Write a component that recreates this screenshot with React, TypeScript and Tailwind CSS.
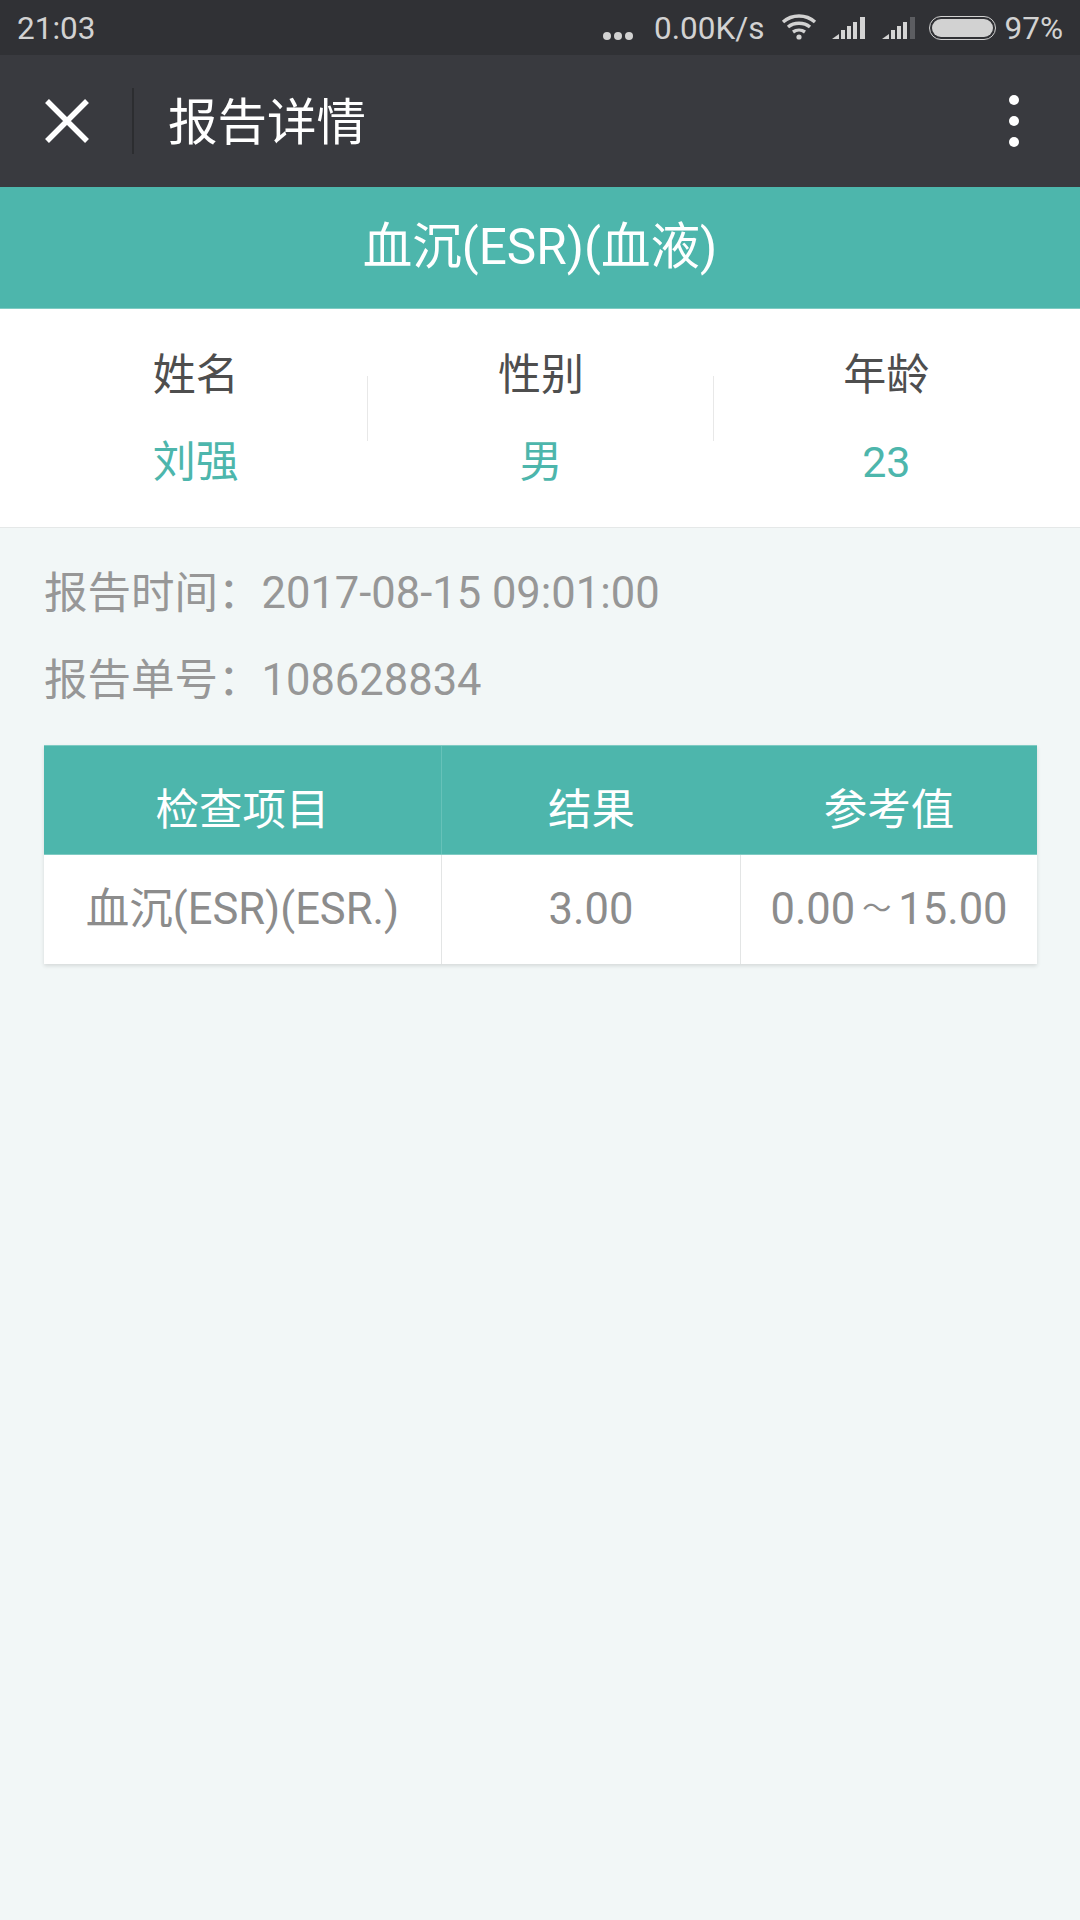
const font = "font-['Roboto','Noto_Sans_CJK_SC',sans-serif]"

function SignalIcon({ dim = false }: { dim?: boolean }) {
  return (
    <svg width="34" height="24" viewBox="0 0 34 24" fill="#d4d4d4">
      <path d="M0 23 L7 18 V23 Z" />
      <rect x="9" y="14" width="4" height="9" />
      <rect x="15" y="10" width="4" height="13" />
      <rect x="21" y="6" width="4" height="17" />
      <rect x="28" y="1" width="5" height="22" fill={dim ? "#5c5d61" : "#d4d4d4"} />
    </svg>
  )
}

function StatusBar() {
  return (
    <div className="flex h-[55px] items-center justify-between bg-[#303135] pl-[17px] pr-[17px] pt-[3px] text-[31.500px] text-[#d2d2d2]">
      <span>21:03</span>
      <div className="flex items-center">
        <div className="mr-[21px] mt-[13px] flex gap-[3px]">
          <span className="h-[8px] w-[8px] rounded-full bg-[#d2d2d2]" />
          <span className="h-[8px] w-[8px] rounded-full bg-[#d2d2d2]" />
          <span className="h-[8px] w-[8px] rounded-full bg-[#d2d2d2]" />
        </div>
        <span>0.00K/s</span>
        <svg className="mb-[5px] ml-[16px]" width="36" height="26" viewBox="0 0 36 26" fill="none" stroke="#d2d2d2" strokeWidth="3.4">
          <path d="M2 8 C11 0 25 0 34 8" />
          <path d="M7 13 C13 8 23 8 29 13" />
          <path d="M12 18 C15.500 15.500 20.500 15.500 24 18" />
          <circle cx="18" cy="23" r="2.600" fill="#d2d2d2" stroke="none" />
        </svg>
        <div className="mb-[3px] ml-[15px]"><SignalIcon /></div>
        <div className="mb-[3px] ml-[16px]"><SignalIcon dim /></div>
        <div className="mb-[3px] ml-[13px] flex h-[24px] w-[67px] items-center rounded-full border-[1.500px] border-[#d2d2d2] p-[2px]">
          <div className="h-full w-full rounded-full bg-[#d2d2d2]" />
        </div>
        <span className="ml-[9px]">97%</span>
      </div>
    </div>
  )
}

function NavBar() {
  return (
    <div className="flex h-[132px] items-center bg-[#393a3f]">
      <div className="flex w-[132px] justify-center pl-[1px]">
        <svg width="44" height="44" viewBox="0 0 44 44" stroke="#ffffff" strokeWidth="5.500">
          <path d="M2 2 L42 42 M42 2 L2 42" />
        </svg>
      </div>
      <div className="h-[66px] w-[2px] bg-[#2c2d30]" />
      <span className="ml-[34px] pt-[4px] text-[49.500px] text-white">报告详情</span>
      <div className="ml-auto mr-[61px] flex flex-col gap-[11px]">
        <span className="h-[10px] w-[10px] rounded-full bg-white" />
        <span className="h-[10px] w-[10px] rounded-full bg-white" />
        <span className="h-[10px] w-[10px] rounded-full bg-white" />
      </div>
    </div>
  )
}

function InfoCell({ label, value, divider }: { label: string; value: string; divider?: boolean }) {
  return (
    <div className="relative flex flex-1 flex-col items-center pt-[37px]">
      <span className="text-[43px] leading-[58px] text-[#4e4e4e]">{label}</span>
      <span className="mt-[29px] text-[43px] leading-[58px] text-[#4db6ac]">{value}</span>
      {divider && <span className="absolute right-0 top-[67px] h-[65px] w-px bg-[#e8e8e8]" />}
    </div>
  )
}

export default function App() {
  return (
    <div className={`flex min-h-[1920px] w-[1080px] flex-col bg-[#f2f7f7] ${font}`}>
      <StatusBar />
      <NavBar />
      <div className="flex h-[122px] items-center justify-center border-b border-[#7fcbc3] bg-[#4db6ac] text-[49.500px] text-white">
        血沉(ESR)(血液)
      </div>
      <div className="flex h-[219px] border-b border-[#e5e8e8] bg-white pl-[23px] pr-[21px]">
        <InfoCell label="姓名" value="刘强" divider />
        <InfoCell label="性别" value="男" divider />
        <InfoCell label="年龄" value="23" />
      </div>
      <div className="px-[44px] pt-[36px] text-[43.500px] text-[#979797]">
        <div className="leading-[60px]">报告时间：2017-08-15 09:01:00</div>
        <div className="mt-[27px] leading-[60px]">报告单号：108628834</div>
      </div>
      <div className="ml-[44px] mt-[34px] w-[993px] shadow-[0_2px_4px_rgba(0,0,0,0.12)]">
        <div className="grid h-[110px] grid-cols-[398px_299px_1fr] border-y border-[#7fcbc3] bg-[#4db6ac] text-[43.500px] text-white">
          <div className="flex items-center justify-center border-r border-[#66c2b9] pt-[22px]">检查项目</div>
          <div className="flex items-center justify-center pt-[22px]">结果</div>
          <div className="flex items-center justify-center pt-[22px]">参考值</div>
        </div>
        <div className="grid h-[109px] grid-cols-[398px_299px_1fr] bg-white text-[43.500px] text-[#8c8c8c]">
          <div className="flex items-center justify-center border-r border-[#e3e5e5]">血沉(ESR)(ESR.)</div>
          <div className="flex items-center justify-center border-r border-[#e3e5e5]">3.00</div>
          <div className="flex items-center justify-center">
            0.00<span className="mx-[7px] text-[29px]">～</span>15.00
          </div>
        </div>
      </div>
    </div>
  )
}
